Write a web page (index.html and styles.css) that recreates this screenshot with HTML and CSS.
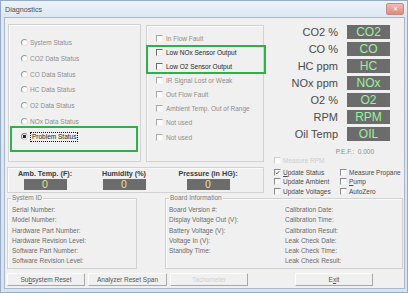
FILE: index.html
```html
<!DOCTYPE html>
<html lang="en">
<head>
  <meta charset="UTF-8" />
  <meta name="viewport" content="width=device-width, initial-scale=1.0"/>
  <title>Diagnostics</title>
  <link rel="stylesheet" href="styles.css">
</head>
<body>
  <div class="window">
    <div class="titlebar">
      <span class="title">Diagnostics</span>
      <span class="close">&#x2715;</span>
    </div>

    <div class="content">
      <div class="upper">
        <div class="leftcol">
          <div class="boxes">
            <!-- status selector -->
            <div class="group radios">
              <div class="opt"><span class="radio"></span>System Status</div>
              <div class="opt"><span class="radio"></span>CO2 Data Status</div>
              <div class="opt"><span class="radio"></span>CO Data Status</div>
              <div class="opt"><span class="radio"></span>HC Data Status</div>
              <div class="opt"><span class="radio"></span>O2 Data Status</div>
              <div class="opt"><span class="radio"></span>NOx Data Status</div>
              <div class="opt on"><span class="radio checked"></span><span class="focus">Problem Status</span></div>
              <div class="mark mark-radio"></div>
            </div>

            <!-- fault flags -->
            <div class="group faults">
              <div class="opt"><span class="chk"></span>In Flow Fault</div>
              <div class="opt on"><span class="chk"></span>Low NOx Sensor Output</div>
              <div class="opt on"><span class="chk"></span>Low O2 Sensor Output</div>
              <div class="opt"><span class="chk"></span>IR Signal Lost or Weak</div>
              <div class="opt"><span class="chk"></span>Out Flow Fault</div>
              <div class="opt"><span class="chk"></span>Ambient Temp. Out of Range</div>
              <div class="opt"><span class="chk"></span>Not used</div>
              <div class="opt"><span class="chk"></span>Not used</div>
              <div class="mark mark-faults"></div>
            </div>
          </div>

          <div class="group amb">
            <div class="cell"><span class="lbl">Amb. Temp. (F):</span><span class="val">0</span></div>
            <div class="cell"><span class="lbl">Humidity (%)</span><span class="val">0</span></div>
            <div class="cell"><span class="lbl">Pressure (in HG):</span><span class="val">0</span></div>
          </div>
        </div>

        <div class="rightcol">
          <div class="readings">
            <span class="lbl">CO2 %</span><span class="val">CO2</span>
            <span class="lbl">CO %</span><span class="val">CO</span>
            <span class="lbl">HC ppm</span><span class="val">HC</span>
            <span class="lbl">NOx ppm</span><span class="val">NOx</span>
            <span class="lbl">O2 %</span><span class="val">O2</span>
            <span class="lbl">RPM</span><span class="val">RPM</span>
            <span class="lbl">Oil Temp</span><span class="val">OIL</span>
          </div>
          <div class="pef">P.E.F.:&nbsp; 0.000</div>

          <div class="opt measure"><span class="chk"></span>Measure RPM</div>
          <div class="opts">
            <div class="opt"><span class="chk checked"><svg viewBox="0 0 7 7"><polyline points="1,3.5 2.8,5.3 6,1.5" /></svg></span><span><u>U</u>pdate Status</span></div>
            <div class="opt"><span class="chk"></span>Measure Propane</div>
            <div class="opt"><span class="chk"></span>Update Ambient</div>
            <div class="opt"><span class="chk"></span><span><u>P</u>ump</span></div>
            <div class="opt"><span class="chk"></span>Update Voltages</div>
            <div class="opt"><span class="chk"></span>AutoZero</div>
          </div>
        </div>
      </div>

      <div class="info">
        <div class="group sysid">
          <span class="group-title">System ID</span>
          <div class="rows">
            <div>Serial Number:</div>
            <div>Model Number:</div>
            <div>Hardware Part Number:</div>
            <div>Hardware Revision Level:</div>
            <div>Software Part Number:</div>
            <div>Software Revision Level:</div>
          </div>
        </div>
        <div class="group board">
          <span class="group-title">Board Information</span>
          <div class="rows split">
            <div class="col">
              <div>Board Version #:</div>
              <div>Display Voltage Out (V):</div>
              <div>Battery Voltage (V):</div>
              <div>Voltage In (V):</div>
              <div>Standby Time:</div>
            </div>
            <div class="col">
              <div>Calibration Date:</div>
              <div>Calibration Time:</div>
              <div>Calibration Result:</div>
              <div>Leak Check Date:</div>
              <div>Leak Check Time:</div>
              <div>Leak Check Result:</div>
            </div>
          </div>
        </div>
      </div>

      <div class="buttons">
        <button class="btn">Su<u>b</u>system Reset</button>
        <button class="btn wide">Analyzer Reset Span</button>
        <button class="btn off">Tachometer</button>
        <button class="btn exit">E<u>x</u>it</button>
      </div>
    </div>
  </div>
</body>
</html>
```

FILE: styles.css
```css
:root {
  --face: #f0f0f0;
  --line: #d2d2d2;
  --mark: #2fb14a;
  --lcd: #6c6c6c;
}

* {
  box-sizing: border-box;
}

body {
  margin: 0;
  font-family: 'Liberation Sans', Arial, sans-serif;
  font-size: 6.5px;
  color: #333;
  background: #fff;
}

.window {
  width: 408px;
  height: 293px;
  border: 1px solid #97acc4;
  background: linear-gradient(#eef3fa, #dce7f3 16px, #d7e3f0);
  display: flex;
  flex-direction: column;
}

.titlebar {
  height: 16px;
  flex: none;
  display: flex;
  justify-content: space-between;
  align-items: flex-start;
  padding: 2px 3px 0 4px;
}

.title {
  font-size: 7.2px;
  line-height: 13px;
  color: #4d4d4d;
}

.close {
  width: 18px;
  height: 12px;
  border: 1px solid #c98a80;
  border-radius: 2px;
  background: linear-gradient(#efbdb5, #de8a7d);
  color: #fff;
  font-size: 6px;
  line-height: 10px;
  text-align: center;
}

.content {
  flex: 1;
  margin: 0 2px 3px 3px;
  background: var(--face);
  border: 1px solid #a9b9ca;
  padding: 6px 0 0 2px;
}

.upper {
  display: flex;
  height: 170px;
}

.leftcol {
  width: 258px;
}

.boxes {
  display: flex;
  height: 138px;
}

.group {
  position: relative;
  border: 1px solid var(--line);
  box-shadow: inset 1px 1px 0 #fbfbfb;
}

.radios {
  width: 133px;
  margin-left: 1px;
  padding: 10px 0 0 12px;
}

.faults {
  width: 118px;
  height: 137px;
  margin: 1px 0 0 5px;
  padding: 5px 0 0 9px;
}

.opt {
  display: flex;
  align-items: center;
  gap: 2px;
  color: #8e8e8e;
  white-space: nowrap;
}

.radios .opt {
  height: 15.7px;
}

.faults .opt {
  height: 14.15px;
  gap: 3px;
}

.opt.on {
  color: #1e1e1e;
}

.radio {
  width: 7px;
  height: 7px;
  flex: none;
  border: 1px solid;
  border-color: #9c9c9c #e4e4e4 #e4e4e4 #9c9c9c;
  border-radius: 50%;
  background: #fafafa;
}

.radio.checked {
  border-color: #7a7a7a #d8d8d8 #d8d8d8 #7a7a7a;
  background: radial-gradient(circle, #222 0 1.4px, #fafafa 1.9px);
}

.focus {
  border: 1px dotted #111;
  padding: 0 1px;
  line-height: 8px;
}

.chk {
  width: 7px;
  height: 7px;
  flex: none;
  border: 1px solid;
  border-color: #a8a8a8 #f4f4f4 #f4f4f4 #a8a8a8;
  background: #fbfbfb;
}

.on .chk {
  border-color: #6a6a6a #eaeaea #eaeaea #6a6a6a;
}

.chk svg {
  display: block;
  width: 100%;
  height: 100%;
}

.chk polyline {
  fill: none;
  stroke: #333;
  stroke-width: 1.2;
}

.mark {
  position: absolute;
  border: 2px solid var(--mark);
}

.mark-radio {
  left: 1px;
  top: 101px;
  width: 128px;
  height: 26px;
}

.mark-faults {
  left: -1px;
  top: 19px;
  width: 120px;
  height: 29px;
}

.amb {
  width: 257px;
  height: 26px;
  margin-top: 5px;
  padding-top: 2px;
  display: grid;
  grid-template-columns: 74px 84px 84px;
}

.amb .cell {
  display: flex;
  flex-direction: column;
  align-items: center;
}

.amb .lbl {
  font-weight: bold;
  font-size: 7.2px;
  line-height: 8px;
  color: #3a3a3a;
}

.amb .val {
  width: 43px;
  height: 11px;
  margin-top: 1px;
  background: var(--lcd);
  color: #efe38c;
  font-size: 10.5px;
  line-height: 11px;
  text-align: center;
}

.rightcol {
  flex: 1;
}

.readings {
  display: grid;
  grid-template-columns: 68px 43px;
  column-gap: 9px;
  row-gap: 3px;
  margin: 1px 0 0 5px;
}

.readings .lbl {
  font-size: 11px;
  line-height: 14px;
  text-align: right;
  color: #4a4a4a;
}

.readings .val {
  height: 14px;
  background: var(--lcd);
  color: #9df09d;
  font-size: 12px;
  line-height: 14px;
  text-align: center;
}

.pef {
  margin-top: 7px;
  padding-right: 30px;
  text-align: right;
  line-height: 8px;
  color: #8c8c8c;
}

.measure {
  height: 9.5px;
  margin: 0 0 2px 9px;
  color: #cdcdcd;
}

.measure .chk {
  border-color: #d0d0d0 #f6f6f6 #f6f6f6 #d0d0d0;
}

.opts {
  display: grid;
  grid-template-columns: 66px auto;
  padding-left: 9px;
}

.opts .opt {
  height: 9.5px;
  color: #4a4a4a;
}

.opts .chk {
  border-color: #8a8a8a #efefef #efefef #8a8a8a;
}

.info {
  display: flex;
  gap: 28px;
  height: 71px;
  margin-top: 4px;
}

.sysid {
  width: 130px;
}

.board {
  width: 238px;
}

.group-title {
  display: block;
  width: max-content;
  margin: -5px 0 0 3px;
  padding: 0 1px;
  background: var(--face);
  line-height: 8px;
  color: #7c7c7c;
}

.rows {
  padding: 3px 0 0 4px;
  color: #6c6c6c;
}

.rows div {
  height: 10.3px;
  line-height: 10.3px;
}

.rows.split {
  display: flex;
  padding-left: 3px;
}

.rows.split .col:first-child {
  width: 116px;
}

.buttons {
  display: flex;
  gap: 3px;
  margin-top: 4px;
}

.btn {
  width: 78px;
  height: 13px;
  padding: 0;
  border: 1px solid;
  border-color: #fdfdfd #a8a8a8 #a8a8a8 #fdfdfd;
  background: var(--face);
  font-family: inherit;
  font-size: 6.5px;
  line-height: 11px;
  color: #555;
}

.btn.wide {
  width: 79px;
}

.btn.off {
  color: #d0d0d0;
}

.btn.exit {
  margin-left: 44px;
}
```
